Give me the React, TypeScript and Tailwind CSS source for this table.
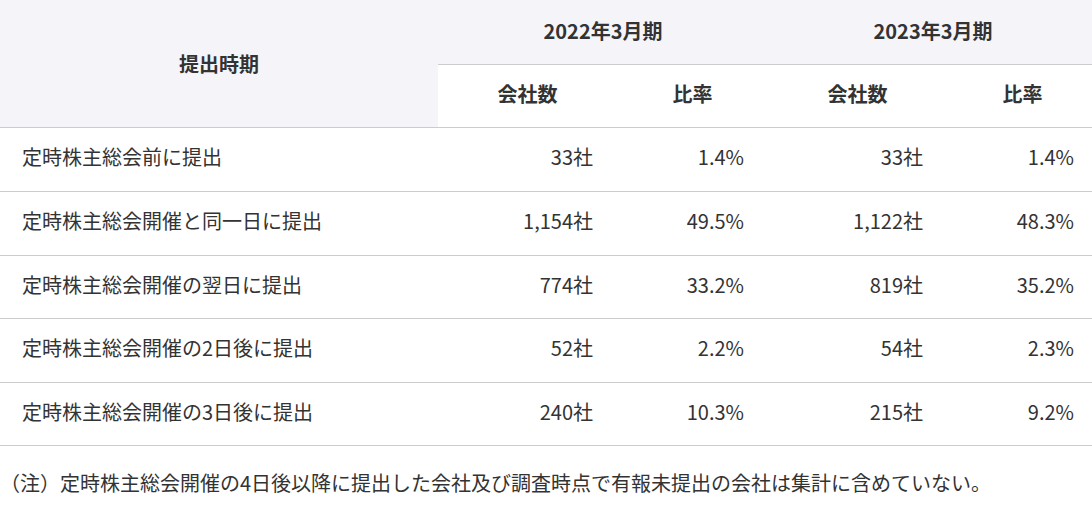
import React from "react";

const rows = [
  { label: "定時株主総会前に提出", a: "33社", b: "1.4%", c: "33社", d: "1.4%", h: "h-[64px]" },
  { label: "定時株主総会開催と同一日に提出", a: "1,154社", b: "49.5%", c: "1,122社", d: "48.3%", h: "h-[64px]" },
  { label: "定時株主総会開催の翌日に提出", a: "774社", b: "33.2%", c: "819社", d: "35.2%", h: "h-[63px]" },
  { label: "定時株主総会開催の2日後に提出", a: "52社", b: "2.2%", c: "54社", d: "2.3%", h: "h-[64px]" },
  { label: "定時株主総会開催の3日後に提出", a: "240社", b: "10.3%", c: "215社", d: "9.2%", h: "h-[63px]" },
];

export default function App() {
  return (
    <div className="w-[1092px] h-[505px] overflow-hidden bg-white text-[20px] text-[#333] font-['Noto_Sans_CJK_JP','Noto_Sans',sans-serif]">
      <div className="w-[1098px] grid grid-cols-[438px_165px_165px_165px_165px]">
        <div className="row-span-2 col-start-1 row-start-1 bg-[#f5f5f9] border-b border-[#cccccc] flex items-center justify-center font-bold">
          提出時期
        </div>
        <div className="col-span-2 h-[65px] bg-[#f5f5f9] border-b border-[#cccccc] flex items-center justify-center font-bold pb-[3px]">
          2022年3月期
        </div>
        <div className="col-span-2 h-[65px] bg-[#f5f5f9] border-b border-[#cccccc] flex items-center justify-center font-bold pb-[3px]">
          2023年3月期
        </div>
        <div className="h-[63px] border-b border-[#cccccc] flex items-center justify-center font-bold pl-[14px] pb-[5px]">会社数</div>
        <div className="h-[63px] border-b border-[#cccccc] flex items-center justify-center font-bold pl-[14px] pb-[5px]">比率</div>
        <div className="h-[63px] border-b border-[#cccccc] flex items-center justify-center font-bold pl-[14px] pb-[5px]">会社数</div>
        <div className="h-[63px] border-b border-[#cccccc] flex items-center justify-center font-bold pl-[14px] pb-[5px]">比率</div>
        {rows.map((r) => (
          <React.Fragment key={r.label}>
            <div className={`${r.h} border-b border-[#cccccc] flex items-center pl-[22px] pb-[5px]`}>{r.label}</div>
            <div className={`${r.h} border-b border-[#cccccc] flex items-center justify-end pr-[10px] pb-[5px]`}>{r.a}</div>
            <div className={`${r.h} border-b border-[#cccccc] flex items-center justify-end pr-[24px] pb-[5px]`}>{r.b}</div>
            <div className={`${r.h} border-b border-[#cccccc] flex items-center justify-end pr-[10px] pb-[5px]`}>{r.c}</div>
            <div className={`${r.h} border-b border-[#cccccc] flex items-center justify-end pr-[24px] pb-[5px]`}>{r.d}</div>
          </React.Fragment>
        ))}
      </div>
      <p className="pt-[22px] leading-[30px] whitespace-nowrap">
        （注）定時株主総会開催の4日後以降に提出した会社及び調査時点で有報未提出の会社は集計に含めていない。
      </p>
    </div>
  );
}
